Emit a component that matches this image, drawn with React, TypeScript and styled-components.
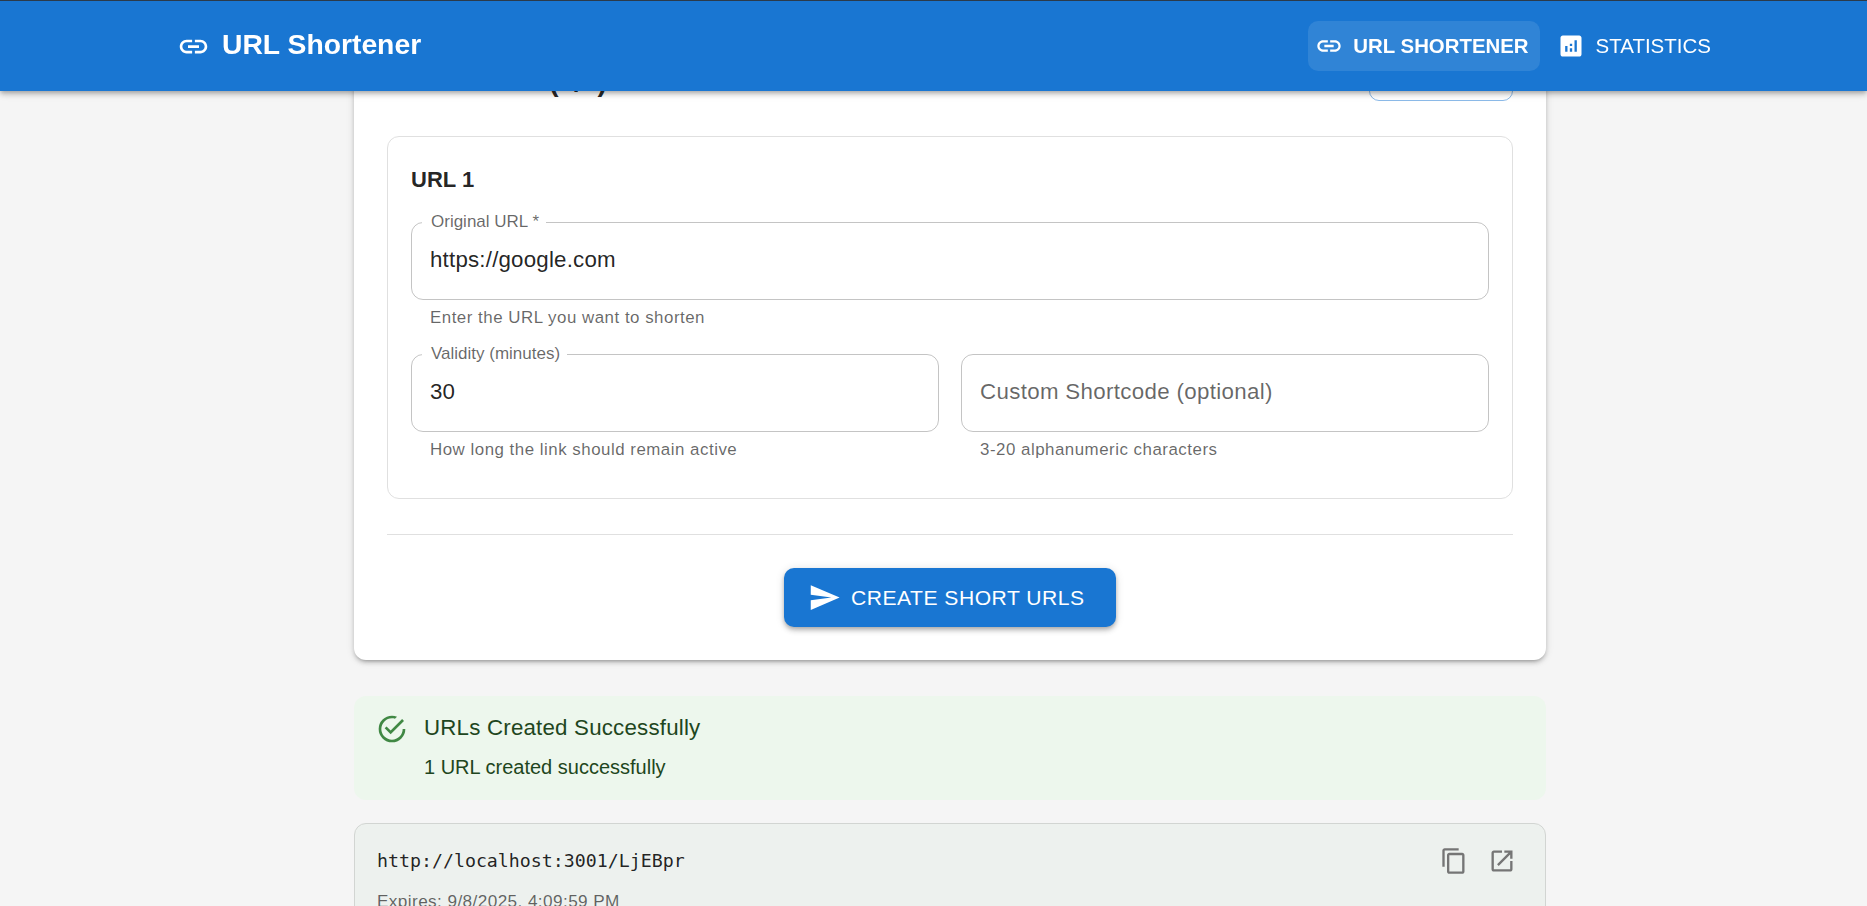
import React from 'react';
import styled, { createGlobalStyle } from 'styled-components';

const GlobalStyle = createGlobalStyle`
  html, body {
    margin: 0;
    height: 100%;
    overflow: hidden;
    background: #f5f5f5;
    font-family: "Liberation Sans", Arial, sans-serif;
    color: rgba(0, 0, 0, 0.87);
  }
  * {
    box-sizing: border-box;
  }
`;

const ICONS = {
  link: 'M3.9 12c0-1.71 1.39-3.1 3.1-3.1h4V7H7c-2.76 0-5 2.24-5 5s2.24 5 5 5h4v-1.9H7c-1.71 0-3.1-1.39-3.1-3.1zM8 13h8v-2H8v2zm9-6h-4v1.9h4c1.71 0 3.1 1.39 3.1 3.1s-1.39 3.1-3.1 3.1h-4V17h4c2.76 0 5-2.24 5-5s-2.24-5-5-5z',
  analytics:
    'M19 3H5c-1.1 0-2 .9-2 2v14c0 1.1.9 2 2 2h14c1.1 0 2-.9 2-2V5c0-1.1-.9-2-2-2zM9 17H7v-5h2v5zm4 0h-2v-3h2v3zm0-5h-2v-2h2v2zm4 5h-2V7h2v10z',
  send: 'M2.01 21 23 12 2.01 3 2 10l15 2-15 2z',
  success:
    'M20,12A8,8 0 0,1 12,20A8,8 0 0,1 4,12A8,8 0 0,1 12,4C12.76,4 13.5,4.11 14.2,4.31L15.77,2.74C14.61,2.26 13.34,2 12,2A10,10 0 0,0 2,12A10,10 0 0,0 12,22A10,10 0 0,0 22,12M7.91,10.08L6.5,11.5L11,16L21,6L19.59,4.58L11,13.17L7.91,10.08Z',
  copy: 'M16 1H4c-1.1 0-2 .9-2 2v14h2V3h12V1zm3 4H8c-1.1 0-2 .9-2 2v14c0 1.1.9 2 2 2h11c1.1 0 2-.9 2-2V7c0-1.1-.9-2-2-2zm0 16H8V7h11v14z',
  open: 'M19 19H5V5h7V3H5c-1.11 0-2 .9-2 2v14c0 1.1.89 2 2 2h14c1.1 0 2-.9 2-2v-7h-2v7zM14 3v2h3.59l-9.83 9.83 1.41 1.41L19 6.41V10h2V3h-7z',
};

const Icon = ({ name, size }: { name: keyof typeof ICONS; size: number }) => (
  <svg width={size} height={size} viewBox="0 0 24 24" fill="currentColor" style={{ flex: 'none' }}>
    <path d={ICONS[name]} />
  </svg>
);

const AppBar = styled.header`
  position: fixed;
  top: 0;
  left: 0;
  right: 0;
  z-index: 10;
  height: 91px;
  display: flex;
  align-items: center;
  justify-content: space-between;
  padding: 0 145px 0 177px;
  background: #1976d2;
  border-top: 1px solid #2b3a4a;
  color: #fff;
  box-shadow: 0 2px 4px -1px rgba(0, 0, 0, 0.2), 0 4px 5px 0 rgba(0, 0, 0, 0.14),
    0 1px 10px 0 rgba(0, 0, 0, 0.12);
`;

const Brand = styled.div`
  display: flex;
  align-items: center;
  gap: 12px;
  font-size: 28.3px;
  line-height: 34px;
  font-weight: 700;
`;

const BrandName = styled.span`
  margin-top: -4px;
`;

const Nav = styled.nav`
  display: flex;
  gap: 10px;
`;

const NavButton = styled.a<{ $active?: boolean }>`
  display: flex;
  align-items: center;
  gap: ${({ $active }) => ($active ? '10px' : '11px')};
  height: 50px;
  padding: 0 11px 0 7px;
  border-radius: 10px;
  font-size: ${({ $active }) => ($active ? '20.4px' : '20.5px')};
  font-weight: ${({ $active }) => ($active ? 700 : 400)};
  background: ${({ $active }) => ($active ? 'rgba(255, 255, 255, 0.1)' : 'transparent')};
`;

const Main = styled.main`
  padding: 23px 0 0 33px;
`;

const Column = styled.div`
  width: 1192px;
  margin: 0 auto;
`;

const Card = styled.section`
  background: #fff;
  border-radius: 12px;
  padding: 33px;
  box-shadow: 0 3px 3px -2px rgba(0, 0, 0, 0.2), 0 3px 4px 0 rgba(0, 0, 0, 0.14),
    0 1px 8px 0 rgba(0, 0, 0, 0.12);
`;

const TitleRow = styled.div`
  display: flex;
  align-items: center;
  justify-content: space-between;
  height: 45px;
  margin-bottom: 35px;
`;

const CardTitle = styled.h2`
  margin: 0;
  padding-top: 6px;
  font-size: 25.5px;
  font-weight: 700;
  word-spacing: 1px;
`;

const TitleCount = styled.span`
  font-size: 28px;
`;

const AddButton = styled.button`
  width: 144px;
  height: 45px;
  border: 1px solid rgba(25, 118, 210, 0.5);
  border-radius: 10px;
  background: transparent;
  color: #1976d2;
  font: inherit;
`;

const UrlBox = styled.div`
  border: 1px solid #e0e0e0;
  border-radius: 12px;
  padding: 24px 23px 37px;
`;

const UrlHeading = styled.h3`
  margin: 0 0 23px;
  height: 38px;
  line-height: 38px;
  font-size: 22px;
  font-weight: 700;
`;

const FieldRow = styled.div`
  display: grid;
  grid-template-columns: 1fr 1fr;
  gap: 22px;
  margin-top: 25px;
`;

const FieldBox = styled.div`
  position: relative;
  height: 78px;
`;

const Outline = styled.fieldset`
  position: absolute;
  inset: -5px 0 0;
  margin: 0;
  padding: 0 10px;
  border: 1px solid rgba(0, 0, 0, 0.23);
  border-radius: 12px;
  pointer-events: none;
`;

const Notch = styled.legend<{ $empty?: boolean }>`
  height: 11px;
  padding: ${({ $empty }) => ($empty ? 0 : '0 8px')};
  font-size: 17px;
  visibility: hidden;
  white-space: nowrap;
`;

const FieldLabel = styled.label`
  position: absolute;
  top: -10px;
  left: 20px;
  font-size: 17px;
  line-height: 20px;
  color: rgba(0, 0, 0, 0.6);
`;

const FieldInput = styled.input`
  width: 100%;
  height: 100%;
  padding: 0 19px 2px;
  border: 0;
  outline: 0;
  background: transparent;
  font-family: inherit;
  font-size: 22.3px;
  letter-spacing: 0.2px;
  color: rgba(0, 0, 0, 0.87);
  &::placeholder {
    color: rgba(0, 0, 0, 0.6);
    opacity: 1;
    letter-spacing: 0.33px;
  }
`;

const Helper = styled.p`
  margin: 7px 0 0 19px;
  height: 22px;
  line-height: 22px;
  font-size: 16.9px;
  letter-spacing: 0.5px;
  color: rgba(0, 0, 0, 0.6);
`;

const Divider = styled.hr`
  margin: 35px 0 33px;
  border: 0;
  border-top: 1px solid #e0e0e0;
`;

const SubmitRow = styled.div`
  display: flex;
  justify-content: center;
`;

const SubmitButton = styled.button`
  display: flex;
  align-items: center;
  gap: 10px;
  width: 332px;
  height: 59px;
  padding: 0 0 0 24px;
  border: 0;
  border-radius: 10px;
  background: #1976d2;
  color: #fff;
  font-family: inherit;
  font-size: 21.1px;
  letter-spacing: 0.5px;
  box-shadow: 0 2px 4px -1px rgba(0, 0, 0, 0.2), 0 4px 5px 0 rgba(0, 0, 0, 0.14),
    0 1px 10px 0 rgba(0, 0, 0, 0.12);
`;

const Alert = styled.div`
  display: flex;
  gap: 16px;
  height: 104px;
  margin-top: 36px;
  padding: 16px 22px;
  border-radius: 12px;
  background: #edf7ed;
  color: #1e4620;
`;

const AlertIcon = styled.div`
  color: #2e7d32;
  opacity: 0.9;
  padding-top: 1px;
`;

const AlertTitle = styled.div`
  font-size: 22.3px;
  line-height: 32px;
  letter-spacing: 0.2px;
`;

const AlertText = styled.div`
  margin-top: 9px;
  font-size: 20px;
  line-height: 28px;
`;

const ResultCard = styled.div`
  display: flex;
  justify-content: space-between;
  margin-top: 23px;
  height: 200px;
  padding: 19px 22px;
  border: 1px solid #d2d5d2;
  border-radius: 12px;
  background: #edf1ee;
`;

const ShortUrl = styled.div`
  font-family: "DejaVu Sans Mono", "Liberation Mono", monospace;
  font-size: 18.25px;
  line-height: 36px;
`;

const Expires = styled.div`
  margin-top: 10px;
  font-size: 17.2px;
  line-height: 24px;
  letter-spacing: 0.4px;
  color: rgba(0, 0, 0, 0.6);
`;

const ActionGroup = styled.div`
  display: flex;
  gap: 20px;
  height: 36px;
  padding-right: 7px;
  color: #757575;
  align-items: center;
`;

type FieldProps = { label?: string; value?: string; placeholder?: string; helper: string };

const Field = ({ label, value, placeholder, helper }: FieldProps) => (
  <div>
    <FieldBox>
      <FieldInput readOnly defaultValue={value} placeholder={placeholder} />
      {label && <FieldLabel>{label}</FieldLabel>}
      <Outline>
        <Notch $empty={!label}>{label}</Notch>
      </Outline>
    </FieldBox>
    <Helper>{helper}</Helper>
  </div>
);

export default function App() {
  return (
    <>
      <GlobalStyle />
      <AppBar>
        <Brand>
          <Icon name="link" size={33} />
          <BrandName>URL Shortener</BrandName>
        </Brand>
        <Nav>
          <NavButton $active>
            <Icon name="link" size={28} />
            URL SHORTENER
          </NavButton>
          <NavButton>
            <Icon name="analytics" size={28} />
            STATISTICS
          </NavButton>
        </Nav>
      </AppBar>
      <Main>
        <Column>
          <Card>
            <TitleRow>
              <CardTitle>
                Create URLs <TitleCount>(1/5)</TitleCount>
              </CardTitle>
              <AddButton>ADD URL</AddButton>
            </TitleRow>
            <UrlBox>
              <UrlHeading>URL 1</UrlHeading>
              <Field label="Original URL *" value="https://google.com" helper="Enter the URL you want to shorten" />
              <FieldRow>
                <Field label="Validity (minutes)" value="30" helper="How long the link should remain active" />
                <Field placeholder="Custom Shortcode (optional)" helper="3-20 alphanumeric characters" />
              </FieldRow>
            </UrlBox>
            <Divider />
            <SubmitRow>
              <SubmitButton>
                <Icon name="send" size={33} />
                CREATE SHORT URLS
              </SubmitButton>
            </SubmitRow>
          </Card>
          <Alert>
            <AlertIcon>
              <Icon name="success" size={32} />
            </AlertIcon>
            <div>
              <AlertTitle>URLs Created Successfully</AlertTitle>
              <AlertText>1 URL created successfully</AlertText>
            </div>
          </Alert>
          <ResultCard>
            <div>
              <ShortUrl>http://localhost:3001/LjEBpr</ShortUrl>
              <Expires>Expires: 9/8/2025, 4:09:59 PM</Expires>
            </div>
            <ActionGroup>
              <Icon name="copy" size={28} />
              <Icon name="open" size={28} />
            </ActionGroup>
          </ResultCard>
        </Column>
      </Main>
    </>
  );
}
